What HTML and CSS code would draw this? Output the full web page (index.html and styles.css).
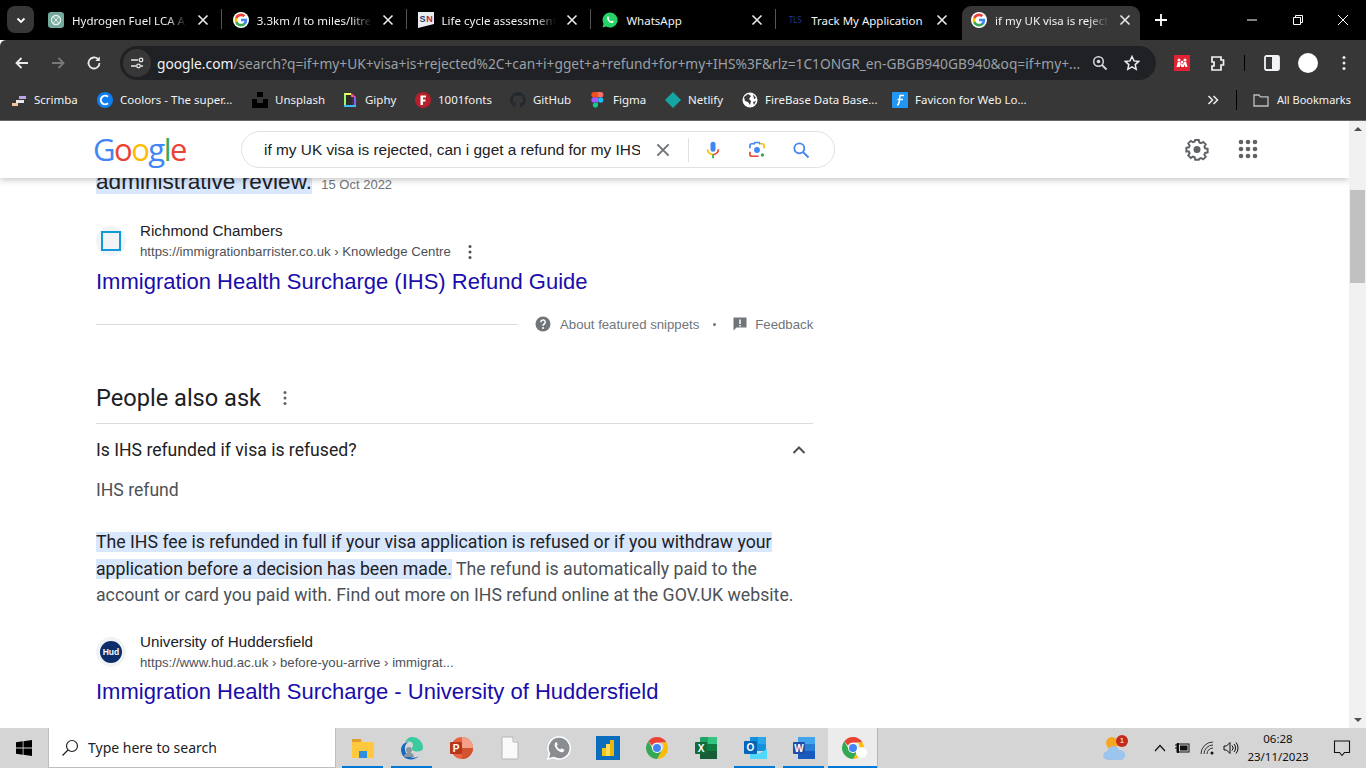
FILE: index.html
```html
<!DOCTYPE html>
<html lang="en">
<head>
    <meta charset="UTF-8">
    <meta name="viewport" content="width=device-width, initial-scale=1.0">
    <title>if my UK visa is rejected - Google Search</title>
    <link rel="stylesheet" href="styles.css">
</head>
<body>

    <svg class="sprite" width="0" height="0">
        <symbol id="g-logo" viewBox="0 0 24 24">
            <path fill="#4285F4" d="M22.56 12.25c0-.78-.07-1.53-.2-2.25H12v4.26h5.92c-.26 1.37-1.04 2.53-2.21 3.31v2.77h3.57c2.08-1.92 3.28-4.74 3.28-8.09z"/>
            <path fill="#34A853" d="M12 23c2.97 0 5.46-.98 7.28-2.66l-3.57-2.77c-.98.66-2.23 1.06-3.71 1.06-2.86 0-5.29-1.93-6.16-4.53H2.18v2.84C3.99 20.53 7.7 23 12 23z"/>
            <path fill="#FBBC05" d="M5.84 14.09c-.22-.66-.35-1.36-.35-2.09s.13-1.43.35-2.09V7.07H2.18C1.43 8.55 1 10.22 1 12s.43 3.45 1.18 4.93l3.66-2.84z"/>
            <path fill="#EA4335" d="M12 5.38c1.62 0 3.06.56 4.21 1.64l3.15-3.15C17.45 2.09 14.97 1 12 1 7.7 1 3.99 3.47 2.18 7.07l3.66 2.84c.87-2.6 3.3-4.53 6.16-4.53z"/>
        </symbol>
        <symbol id="x-icon" viewBox="0 0 16 16">
            <path d="M3.5 3.5l9 9M12.5 3.5l-9 9" fill="none" stroke="currentColor" stroke-width="1.6"/>
        </symbol>
        <symbol id="dots-icon" viewBox="0 0 4 16">
            <circle cx="2" cy="2.5" r="1.5" fill="currentColor"/>
            <circle cx="2" cy="8" r="1.5" fill="currentColor"/>
            <circle cx="2" cy="13.5" r="1.5" fill="currentColor"/>
        </symbol>
        <symbol id="chrome-icon" viewBox="0 0 24 24">
            <path fill="#EA4335" d="M12 1a11 11 0 0 1 9.5 5.5H12a5.5 5.5 0 0 0-5 3.2L3.300 5.300A11 11 0 0 1 12 1z"/>
            <path fill="#FBBC05" d="M21.500 6.500A11 11 0 0 1 12 23l4.700-8.200a5.500 5.500 0 0 0 0-8.300z"/>
            <path fill="#34A853" d="M3.300 5.300L7.900 13.500a5.500 5.500 0 0 0 8.800 1.300L12 23A11 11 0 0 1 3.300 5.300z"/>
            <circle cx="12" cy="12" r="5" fill="#fff"/>
            <circle cx="12" cy="12" r="4" fill="#4285F4"/>
        </symbol>
    </svg>

    <!-- tabs -->
    <div class="tabstrip">
        <div class="tab-search">
            <svg width="12" height="12" viewBox="0 0 12 12"><path d="M2.500 4.500L6 8l3.500-3.500" fill="none" stroke="#fff" stroke-width="1.800"/></svg>
        </div>
        <div class="tab">
            <svg class="favicon" viewBox="0 0 16 16"><rect width="16" height="16" rx="3" fill="#74aa9c"/><circle cx="8" cy="8" r="4.500" fill="none" stroke="#e8f2ef" stroke-width="1.300"/><path d="M5 4.500l6 7M11 4.500l-6 7" stroke="#e8f2ef" stroke-width="1"/></svg>
            <span class="tab-title">Hydrogen Fuel LCA A</span>
            <svg class="tab-close"><use href="#x-icon"/></svg>
        </div>
        <div class="tab">
            <svg class="favicon favicon-round"><use href="#g-logo"/></svg>
            <span class="tab-title">3.3km /l to miles/litre</span>
            <svg class="tab-close"><use href="#x-icon"/></svg>
        </div>
        <div class="tab">
            <svg class="favicon" viewBox="0 0 16 16"><path d="M0 0h16v12L0 16z" fill="#e9edf2"/><text x="4.500" y="9.500" class="sn-s">S</text><text x="11.500" y="9.500" class="sn-n">N</text></svg>
            <span class="tab-title">Life cycle assessment</span>
            <svg class="tab-close"><use href="#x-icon"/></svg>
        </div>
        <div class="tab">
            <svg class="favicon" viewBox="0 0 16 16"><path d="M8 .500a7.500 7.500 0 0 0-6.400 11.300L.500 15.500l3.800-1A7.500 7.500 0 1 0 8 .500z" fill="#25d366"/><path d="M5.500 4.500c-1 1-.8 2.600.7 4.400 1.500 1.700 3.200 2.600 4.500 2 .7-.3 1-1 .9-1.500L10 8.500l-.8.900c-1-.4-2-1.400-2.500-2.500l.7-.8-.8-1.700z" fill="#fff"/></svg>
            <span class="tab-title tab-title-full">WhatsApp</span>
            <svg class="tab-close"><use href="#x-icon"/></svg>
        </div>
        <div class="tab">
            <span class="favicon tls">TLS</span>
            <span class="tab-title tab-title-full">Track My Application</span>
            <svg class="tab-close"><use href="#x-icon"/></svg>
        </div>
        <div class="tab tab-active">
            <svg class="favicon favicon-round"><use href="#g-logo"/></svg>
            <span class="tab-title">if my UK visa is reject</span>
            <svg class="tab-close"><use href="#x-icon"/></svg>
        </div>
        <svg class="new-tab" width="14" height="14" viewBox="0 0 14 14"><path d="M7 1v12M1 7h12" stroke="#fff" stroke-width="1.800"/></svg>
        <div class="window-buttons">
            <svg width="12" height="12" viewBox="0 0 12 12"><path d="M1 6h10" stroke="#fff"/></svg>
            <svg width="12" height="12" viewBox="0 0 12 12"><path d="M1.500 3.500h7v7h-7zM3.500 3.500v-2h7v7h-2" fill="none" stroke="#fff"/></svg>
            <svg width="12" height="12" viewBox="0 0 12 12"><path d="M1 1l10 10M11 1L1 11" stroke="#fff"/></svg>
        </div>
    </div>

    <!-- address bar -->
    <div class="toolbar">
        <svg class="nav-icon" viewBox="0 0 16 16"><path d="M14 8H2.500M7.500 3L2.500 8l5 5" fill="none" stroke="#e8eaed" stroke-width="1.800"/></svg>
        <svg class="nav-icon" viewBox="0 0 16 16"><path d="M2 8h11.500M8.500 3l5 5-5 5" fill="none" stroke="#77797c" stroke-width="1.800"/></svg>
        <svg class="nav-icon" viewBox="0 0 16 16"><path d="M13.500 8A5.500 5.500 0 1 1 12 4.200" fill="none" stroke="#e8eaed" stroke-width="1.800"/><path d="M13.800 1.500v4.500H9.300z" fill="#e8eaed"/></svg>
        <div class="omnibox">
            <div class="site-info">
                <svg width="14" height="14" viewBox="0 0 14 14"><path d="M1 4h7M11 10h2M1 10h5" stroke="#e8eaed" stroke-width="1.400"/><circle cx="11" cy="4" r="1.800" fill="none" stroke="#e8eaed" stroke-width="1.300"/><circle cx="8.500" cy="10" r="1.800" fill="none" stroke="#e8eaed" stroke-width="1.300"/></svg>
            </div>
            <div class="url"><span class="url-host">google.com</span>/search?q=if+my+UK+visa+is+rejected%2C+can+i+gget+a+refund+for+my+IHS%3F&amp;rlz=1C1ONGR_en-GBGB940GB940&amp;oq=if+my+...</div>
            <svg class="omni-icon" viewBox="0 0 16 16"><circle cx="6.500" cy="6.500" r="4.800" fill="none" stroke="#d5d7da" stroke-width="1.500"/><circle cx="6.500" cy="6.500" r="1.800" fill="#d5d7da"/><path d="M10 10l4.500 4.500" stroke="#d5d7da" stroke-width="1.800"/></svg>
            <svg class="omni-icon" viewBox="0 0 16 16"><path d="M8 1.500l2 4.400 4.700.5-3.500 3.200 1 4.700L8 11.900l-4.200 2.400 1-4.700L1.300 6.400 6 5.900z" fill="none" stroke="#e8eaed" stroke-width="1.500"/></svg>
        </div>
        <div class="toolbar-actions">
            <svg width="16" height="16" viewBox="0 0 16 16"><rect width="16" height="16" fill="#e02232"/><g fill="#fff"><circle cx="5" cy="5" r="1.500"/><circle cx="11" cy="5" r="1.500"/><circle cx="8" cy="7" r="1.300"/><path d="M2.500 12l1.300-5h2.400l.8 3 .8-2h.4l.8 2 .8-3h2.400l1.300 5h-2.200l-.7-2.500-.9 2.500H7.300l-.9-2.500-.7 2.500z"/></g></svg>
            <svg class="puzzle" width="18" height="18" viewBox="0 0 18 18"><path d="M3 3h9v3h2.500v5H12v5H3v-4h2V8H3z" fill="none" stroke="#f1f3f4" stroke-width="1.700"/></svg>
            <span class="toolbar-sep"></span>
            <svg class="panel" width="16" height="16" viewBox="0 0 16 16"><rect x="1" y="1" width="14" height="14" rx="1.500" fill="none" stroke="#f1f3f4" stroke-width="1.800"/><rect x="8" y="1" width="7" height="14" fill="#f1f3f4"/></svg>
            <span class="avatar"></span>
            <svg class="menu-dots" width="4" height="16" color="#e8eaed"><use href="#dots-icon"/></svg>
        </div>
    </div>

    <!-- bookmarks -->
    <div class="bookmarks">
        <div class="bookmark bm-scrimba">
            <svg viewBox="0 0 16 16"><rect x="8" y="4" width="7" height="3" fill="#b9a7e8"/><rect x="5" y="8" width="8" height="3" fill="#e8e8e8"/><rect x="1" y="11" width="6" height="3" fill="#f0c59b"/></svg>
            <span>Scrimba</span>
        </div>
        <div class="bookmark bm-coolors">
            <svg viewBox="0 0 16 16"><circle cx="8" cy="8" r="8" fill="#0f7ff0"/><path d="M11 4.800a4.300 4.300 0 1 0 0 6.400" fill="none" stroke="#fff" stroke-width="2"/></svg>
            <span>Coolors - The super...</span>
        </div>
        <div class="bookmark bm-unsplash">
            <svg viewBox="0 0 16 16"><path d="M5 0h6v5H5zM0 7h5v4h6V7h5v9H0z" fill="#000"/></svg>
            <span>Unsplash</span>
        </div>
        <div class="bookmark bm-giphy">
            <svg viewBox="0 0 16 16"><path d="M2 1h8v14H2z" fill="#2b2b2b"/><path d="M2 1h2v14H2z" fill="#a5f56c"/><path d="M2 13h12v2H2z" fill="#38bdf8"/><path d="M12 5h2v8h-2z" fill="#8b5cf6"/><path d="M3 1h6v2H3z" fill="#fff45c"/><path d="M9 1l5 4h-5z" fill="#f9588f"/></svg>
            <span>Giphy</span>
        </div>
        <div class="bookmark bm-fonts">
            <svg viewBox="0 0 16 16"><circle cx="8" cy="8" r="8" fill="#b5202b"/><path d="M5.500 3.500h5.500v2H8v2h2.500v2H8v3.500H5.500z" fill="#fff"/></svg>
            <span>1001fonts</span>
        </div>
        <div class="bookmark bm-github">
            <svg viewBox="0 0 16 16"><path d="M8 0a8 8 0 0 0-2.500 15.600c.4 0 .5-.2.500-.4v-1.400c-2.200.5-2.700-1-2.700-1-.4-.9-.9-1.200-.9-1.200-.7-.5.100-.5.100-.5.800.1 1.200.8 1.200.8.700 1.200 1.900.9 2.300.7 0-.5.300-.9.500-1.100-1.800-.2-3.600-.9-3.600-4 0-.9.300-1.600.8-2.100 0-.2-.4-1 .1-2.100 0 0 .7-.2 2.200.8a7.700 7.700 0 0 1 4 0c1.500-1 2.200-.8 2.200-.8.400 1.100.2 1.900.1 2.100.5.600.8 1.300.8 2.100 0 3.100-1.900 3.700-3.700 3.900.3.300.6.800.6 1.500v2.200c0 .2.100.5.600.4A8 8 0 0 0 8 0z" fill="#24292f"/></svg>
            <span>GitHub</span>
        </div>
        <div class="bookmark bm-figma">
            <svg viewBox="0 0 16 16"><path d="M4 0h4v5.300H4a2.650 2.650 0 0 1 0-5.300z" fill="#f24e1e"/><path d="M8 0h2.700a2.650 2.650 0 0 1 0 5.300H8z" fill="#ff7262"/><path d="M4 5.300h4v5.300H4a2.650 2.650 0 0 1 0-5.300z" fill="#a259ff"/><circle cx="10.700" cy="8" r="2.650" fill="#1abcfe"/><path d="M4 10.700h4v2.700A2.650 2.650 0 1 1 4 10.700z" fill="#0acf83"/></svg>
            <span>Figma</span>
        </div>
        <div class="bookmark bm-netlify">
            <svg viewBox="0 0 16 16"><path d="M8 0l8 8-8 8-8-8z" fill="#15a6a3"/></svg>
            <span>Netlify</span>
        </div>
        <div class="bookmark bm-firebase">
            <svg viewBox="0 0 16 16"><circle cx="8" cy="8" r="7.500" fill="#fff"/><path d="M2 5l4-3 3 2-2 3 2 2-1 4-2-3-3-1zM11 2l3 4-2 1zM11 10l3-1-2 4z" fill="#3a3a3a"/></svg>
            <span>FireBase Data Base...</span>
        </div>
        <div class="bookmark bm-favicon">
            <svg viewBox="0 0 16 16"><rect width="16" height="16" rx="1" fill="#2196f3"/><path d="M5 13c2 0 2-2 2.300-4L8 3.500h4M5.500 7.500H11" fill="none" stroke="#fff" stroke-width="1.500"/></svg>
            <span>Favicon for Web Lo...</span>
        </div>
        <div class="bookmarks-end">
            <svg width="12" height="12" viewBox="0 0 12 12"><path d="M1.500 2l4 4-4 4M6.500 2l4 4-4 4" fill="none" stroke="#e8eaed" stroke-width="1.600"/></svg>
            <span class="toolbar-sep"></span>
            <div class="bookmark all-bookmarks">
                <svg viewBox="0 0 16 16"><path d="M1 3h5l1.500 1.800H15V14H1z" fill="none" stroke="#bdbfc2" stroke-width="1.300"/></svg>
                <span>All Bookmarks</span>
            </div>
        </div>
    </div>

    <!-- page -->
    <div class="viewport">
        <div class="page">
            <header class="search-header">
                <div class="google-logo"><span class="c-blue">G</span><span class="c-red">o</span><span class="c-yellow">o</span><span class="c-blue">g</span><span class="c-green">l</span><span class="c-red">e</span></div>
                <div class="search-box">
                    <span class="search-text">if my UK visa is rejected, can i gget a refund for my IHS</span>
                    <svg class="search-clear" width="20" height="20" color="#70757a"><use href="#x-icon"/></svg>
                    <span class="search-sep"></span>
                    <svg class="search-btn" viewBox="0 0 24 24"><rect x="9" y="2" width="6" height="12" rx="3" fill="#4285f4"/><path d="M5.500 11a6.500 6.500 0 0 0 6.500 6.500" fill="none" stroke="#fbbc05" stroke-width="2"/><path d="M12 17.500A6.500 6.500 0 0 0 18.500 11" fill="none" stroke="#ea4335" stroke-width="2"/><path d="M12 17.500V22" stroke="#34a853" stroke-width="2"/></svg>
                    <svg class="search-btn" viewBox="0 0 24 24"><path d="M8 5l1.500-2h5L16 5" fill="none" stroke="#4285f4" stroke-width="2"/><path d="M16 4.500h2a2.500 2.500 0 0 1 2.500 2.500v3" fill="none" stroke="#fbbc05" stroke-width="2"/><path d="M3.500 10V7A2.500 2.500 0 0 1 6 4.500h3" fill="none" stroke="#4285f4" stroke-width="2"/><path d="M3.500 14v3A2.500 2.500 0 0 0 6 19.500h8" fill="none" stroke="#ea4335" stroke-width="2"/><circle cx="12" cy="12" r="3.500" fill="#4285f4"/><circle cx="18.500" cy="18" r="2" fill="#34a853"/></svg>
                    <svg class="search-btn" viewBox="0 0 24 24"><circle cx="10" cy="10" r="6" fill="none" stroke="#4285f4" stroke-width="2.200"/><path d="M14.500 14.500L21 21" stroke="#4285f4" stroke-width="2.400"/></svg>
                </div>
                <div class="header-right">
                    <svg width="24" height="24" viewBox="0 0 24 24"><path d="M10 2h4l.6 2.800 1.900.8 2.400-1.500 2.800 2.800-1.500 2.400.8 1.900 2.800.6v4l-2.800.6-.8 1.900 1.500 2.400-2.800 2.800-2.400-1.500-1.900.8L14 24h-4l-.6-2.800-1.900-.8-2.400 1.500-2.800-2.800 1.500-2.400-.8-1.900L.2 14.700v-4l2.800-.6.800-1.900-1.500-2.400 2.800-2.800 2.400 1.500 1.900-.8z" transform="translate(1.200 1.200) scale(.9)" fill="none" stroke="#5f6368" stroke-width="2.200"/><circle cx="12" cy="12.500" r="3.500" fill="#5f6368"/></svg>
                    <svg width="20" height="20" viewBox="0 0 20 20" fill="#5f6368"><circle cx="3" cy="3" r="2.300"/><circle cx="10" cy="3" r="2.300"/><circle cx="17" cy="3" r="2.300"/><circle cx="3" cy="10" r="2.300"/><circle cx="10" cy="10" r="2.300"/><circle cx="17" cy="10" r="2.300"/><circle cx="3" cy="17" r="2.300"/><circle cx="10" cy="17" r="2.300"/><circle cx="17" cy="17" r="2.300"/></svg>
                </div>
            </header>

            <main class="results">
                <div class="snippet-end"><span class="hl">administrative review.</span> <span class="snippet-date">15 Oct 2022</span></div>

                <div class="source">
                    <div class="source-icon"><span class="rc-square"></span></div>
                    <div class="source-text">
                        <div class="source-name">Richmond Chambers</div>
                        <div class="source-url">https://immigrationbarrister.co.uk › Knowledge Centre <svg class="url-dots" width="4" height="16" color="#4d5156"><use href="#dots-icon"/></svg></div>
                    </div>
                </div>
                <a class="result-title" href="#">Immigration Health Surcharge (IHS) Refund Guide</a>

                <div class="snippet-foot">
                    <span class="foot-line"></span>
                    <svg width="16" height="16" viewBox="0 0 16 16"><circle cx="8" cy="8" r="7.500" fill="#70757a"/><path d="M5.800 6.200a2.200 2.200 0 1 1 3.400 1.800c-.8.500-1.200.9-1.200 1.800" fill="none" stroke="#fff" stroke-width="1.500"/><circle cx="8" cy="12" r="1" fill="#fff"/></svg>
                    <span class="foot-text">About featured snippets</span>
                    <span class="foot-dot"></span>
                    <svg width="16" height="16" viewBox="0 0 16 16"><path d="M1.500 1.500h13v10H4.500l-3 3z" fill="#70757a"/><path d="M8 3.500v4.500M8 9v1.500" stroke="#fff" stroke-width="1.500"/></svg>
                    <span class="foot-text">Feedback</span>
                </div>

                <div class="paa-head">
                    <h2 class="paa-title">People also ask</h2>
                    <svg width="4" height="16" color="#5f6368"><use href="#dots-icon"/></svg>
                </div>

                <div class="paa-question">
                    <span>Is IHS refunded if visa is refused?</span>
                    <svg width="16" height="16" viewBox="0 0 16 16"><path d="M2.500 11L8 5.500l5.500 5.500" fill="none" stroke="#4d5156" stroke-width="2"/></svg>
                </div>
                <div class="paa-sub">IHS refund</div>
                <p class="paa-answer"><span class="hl hl-dark">The IHS fee is refunded in full if your visa application is refused or if you withdraw your application before a decision has been made.</span> The refund is automatically paid to the account or card you paid with. Find out more on IHS refund online at the GOV.UK website.</p>

                <div class="source source-hud">
                    <div class="source-icon"><span class="hud-badge">Hud</span></div>
                    <div class="source-text">
                        <div class="source-name">University of Huddersfield</div>
                        <div class="source-url">https://www.hud.ac.uk › before-you-arrive › immigrat...</div>
                    </div>
                </div>
                <a class="result-title" href="#">Immigration Health Surcharge - University of Huddersfield</a>
            </main>
        </div>
        <div class="scrollbar">
            <span class="arrow-up"></span>
            <div class="scroll-track"><div class="scroll-thumb"></div></div>
            <span class="arrow-down"></span>
        </div>
    </div>

    <!-- windows taskbar -->
    <div class="taskbar">
        <div class="start">
            <svg width="16" height="16" viewBox="0 0 16 16" fill="#000"><path d="M0 2.300L6.700 1.300V7.600H0zM7.500 1.200L16 0v7.600H7.500zM0 8.400h6.700v6.300L0 13.700zM7.500 8.400H16V16L7.500 14.800z"/></svg>
        </div>
        <div class="task-search">
            <svg width="18" height="18" viewBox="0 0 18 18"><circle cx="11" cy="7" r="5.500" fill="none" stroke="#222" stroke-width="1.200"/><path d="M7 11l-5.500 5.500" stroke="#222" stroke-width="1.300"/></svg>
            <span>Type here to search</span>
        </div>
        <div class="task-icons">
            <div class="task-app running">
                <svg viewBox="0 0 24 24"><path d="M1 3h9l2 3h11v16H1z" fill="#ffc83d"/><path d="M1 3h9v3H1z" fill="#e0a030"/><path d="M8 15h8v7H8z" fill="#2d8fe0"/></svg>
            </div>
            <div class="task-app running">
                <svg viewBox="0 0 24 24"><path d="M12 1a11 11 0 0 1 11 11c0 2.500-3 3.500-6 3.500-3 0-5-1-5-3 0-1.500 1-2 1-3.500C13 6 9 4 5 7 6 3.500 8.500 1 12 1z" fill="#3bc9a0"/><path d="M1 13c1-5 4-7 7-6.500-4 2-4 8-1 12 2.500 3 8 4.500 12 1.500-2 2-5 3.500-8 3.500-6 0-10-4-10-10.500z" fill="#1468c4"/><circle cx="9" cy="14" r="3" fill="#8b979f"/><path d="M4 21c0-3 2-4.500 5-4.500s5 1.500 5 4.500z" fill="#8b979f"/></svg>
            </div>
            <div class="task-app">
                <svg viewBox="0 0 24 24"><circle cx="13" cy="12" r="11" fill="#e8633e"/><path d="M13 1a11 11 0 0 1 11 11H13z" fill="#f2a08a"/><path d="M13 12h11a11 11 0 0 1-11 11z" fill="#d35230"/><rect x="1" y="6" width="12" height="12" rx="1" fill="#b7361a"/><text x="7" y="15.500" class="ppt-letter">P</text></svg>
            </div>
            <div class="task-app">
                <svg viewBox="0 0 24 24"><path d="M4 1h11l5 5v17H4z" fill="#f9f9f9" stroke="#b5b5b5"/><path d="M15 1v5h5" fill="#e5e5e5" stroke="#b5b5b5"/></svg>
            </div>
            <div class="task-app">
                <svg viewBox="0 0 24 24"><path d="M12 1a11 11 0 0 0-9.500 16.500L1 23l5.700-1.500A11 11 0 1 0 12 1z" fill="#8a8d90" stroke="#fff" stroke-width="1.500"/><path d="M8.500 6.500c-1.500 1.500-1 4 1 6.500s4.500 3.800 6.500 3c1-.5 1.400-1.500 1.200-2.200l-2.700-1.500-1.100 1.300c-1.500-.6-2.900-2-3.700-3.700l1.100-1.200-1.200-2.600z" fill="#fff"/></svg>
            </div>
            <div class="task-app">
                <svg viewBox="0 0 24 24"><rect width="24" height="24" fill="#0a6ebd"/><rect x="6" y="12" width="4" height="8" fill="#f2c811"/><rect x="10" y="8" width="4" height="12" fill="#f9dc5c"/><rect x="14" y="4" width="4" height="16" fill="#e8b70a"/></svg>
            </div>
            <div class="task-app">
                <svg><use href="#chrome-icon"/></svg>
            </div>
            <div class="task-app">
                <svg viewBox="0 0 24 24"><rect x="6" y="1" width="17" height="22" rx="1" fill="#21a366"/><rect x="14" y="1" width="9" height="7" fill="#33c481"/><rect x="6" y="8" width="17" height="7" fill="#107c41"/><rect x="6" y="15" width="17" height="8" fill="#185c37"/><rect x="1" y="6" width="12" height="12" rx="1" fill="#0f6b3a"/><text x="7" y="15.500" class="ppt-letter">X</text></svg>
            </div>
            <div class="task-app running">
                <svg viewBox="0 0 24 24"><rect x="7" y="1" width="16" height="14" fill="#1490df"/><rect x="15" y="1" width="8" height="7" fill="#28a8ea"/><path d="M7 13l8 5 9-5v10H7z" fill="#50d9ff"/><rect x="1" y="5" width="13" height="13" rx="1" fill="#0364b8"/><text x="7.500" y="15" class="ppt-letter">O</text></svg>
            </div>
            <div class="task-app running">
                <svg viewBox="0 0 24 24"><rect x="6" y="1" width="17" height="22" rx="1" fill="#2b7cd3"/><rect x="6" y="1" width="17" height="7" fill="#41a5ee"/><rect x="6" y="15" width="17" height="8" fill="#185abd"/><rect x="1" y="6" width="12" height="12" rx="1" fill="#1e4ea8"/><text x="7" y="15.500" class="ppt-letter">W</text></svg>
            </div>
            <div class="task-app running task-active">
                <svg><use href="#chrome-icon"/></svg>
                <span class="chrome-dot"></span>
            </div>
        </div>
        <span class="task-divider"></span>
        <div class="tray">
            <div class="weather">
                <svg width="26" height="26" viewBox="0 0 26 26"><circle cx="10" cy="8" r="6" fill="#f5a623"/><path d="M6 25a4.500 4.500 0 0 1-.5-9 6 6 0 0 1 11.500-1 5 5 0 0 1 2 10z" fill="#9cc4ec"/></svg>
                <span class="weather-badge">1</span>
            </div>
            <svg class="tray-caret" width="12" height="8" viewBox="0 0 12 8"><path d="M1 7l5-5.500L11 7" fill="none" stroke="#111" stroke-width="1.200"/></svg>
            <svg class="tray-icon" width="16" height="12" viewBox="0 0 16 12"><path d="M1 3h2M1 6h2M3 1.500h1.500v9H3z" stroke="#111"/><rect x="4.500" y="2" width="10.500" height="8" fill="none" stroke="#111"/><rect x="6" y="3.500" width="7.500" height="5" fill="#111"/></svg>
            <svg class="tray-icon tray-wifi" width="16" height="14" viewBox="0 0 16 14"><path d="M1 13A12 12 0 0 1 13 1M4 13a9 9 0 0 1 9-9M7 13a6 6 0 0 1 6-6" fill="none" stroke="#333"/><circle cx="12" cy="12" r="1.500" fill="#111"/></svg>
            <svg class="tray-icon" width="16" height="14" viewBox="0 0 16 14"><path d="M1 5h2.500L7 1.500v11L3.500 9H1z" fill="none" stroke="#111"/><path d="M9 4.500a3.500 3.500 0 0 1 0 5M11 3a6 6 0 0 1 0 8M13 1.500a8.500 8.500 0 0 1 0 11" fill="none" stroke="#111"/></svg>
            <div class="clock">
                <div>06:28</div>
                <div>23/11/2023</div>
            </div>
            <svg class="notify" width="18" height="18" viewBox="0 0 18 18"><path d="M1.500 2h15v11.500h-5L9 16.500l-2.500-3h-5z" fill="none" stroke="#111" stroke-width="1.100"/></svg>
        </div>
    </div>

</body>
</html>
```

FILE: styles.css
```css
* {
    box-sizing: border-box;
}
html, body {
    margin: 0;
    height: 768px;
    overflow: hidden;
}
body {
    font-family: 'Liberation Sans', Arial, sans-serif;
    background-color: #fff;
    display: flex;
    flex-direction: column;
}
.sprite {
    position: absolute;
}

/* tabs */
.tabstrip {
    height: 40px;
    background-color: #000;
    display: flex;
    align-items: flex-end;
    padding-left: 7px;
    position: relative;
    flex-shrink: 0;
}
.tab-search {
    width: 27px;
    height: 27px;
    margin-bottom: 7px;
    margin-right: 3px;
    background-color: #373737;
    border-radius: 8px;
    display: flex;
    align-items: center;
    justify-content: center;
}
.tab {
    width: 184.8px;
    height: 34px;
    padding: 0 11px 6px 11px;
    display: flex;
    align-items: center;
    gap: 8px;
    color: #f1f3f4;
    font-family: 'Noto Sans', sans-serif;
    font-size: 11.500px;
    position: relative;
}
.tab::after {
    content: "";
    position: absolute;
    right: 0;
    top: 3px;
    height: 20px;
    border-right: 1px solid #555;
}
.tab:nth-child(6)::after,
.tab:nth-child(7)::after,
.tab-active::after {
    display: none;
}
.tab-active {
    width: 178px;
    margin-left: 1px;
    padding-right: 7px;
    padding-left: 9px;
    background-color: #373737;
    border-radius: 9px 9px 0 0;
}
.favicon {
    width: 16px;
    height: 16px;
    flex-shrink: 0;
}
.favicon-round {
    background-color: #fff;
    border-radius: 50%;
    padding: 1px;
}
.sn-s, .sn-n {
    font-family: 'Liberation Sans', sans-serif;
    font-size: 9px;
    font-weight: bold;
    text-anchor: middle;
}
.sn-s { fill: #1f3f77; }
.sn-n { fill: #d3222a; }
.tls {
    color: #1c3a8a;
    font-size: 8px;
    line-height: 16px;
    text-align: center;
}
.tab-title {
    flex: 1;
    min-width: 0;
    white-space: nowrap;
    overflow: hidden;
    -webkit-mask-image: linear-gradient(to right, #000 82%, transparent 100%);
    mask-image: linear-gradient(to right, #000 82%, transparent 100%);
}
.tab-title-full {
    -webkit-mask-image: none;
    mask-image: none;
}
.tab-close {
    width: 16px;
    height: 16px;
    flex-shrink: 0;
    color: #e8eaed;
}
.new-tab {
    margin-left: 14px;
    margin-bottom: 13px;
}
.window-buttons {
    margin-left: auto;
    width: 138px;
    padding: 0 17px 0 18px;
    height: 40px;
    display: flex;
    align-items: center;
    justify-content: space-between;
}

/* toolbar */
.toolbar {
    height: 44px;
    padding-top: 2px;
    background-color: #373737;
    display: flex;
    align-items: center;
    padding-left: 14px;
    flex-shrink: 0;
    border-radius: 6px 0 0 0;
}
.nav-icon {
    width: 16px;
    height: 16px;
    margin-right: 20px;
    flex-shrink: 0;
}
.omnibox {
    width: 1036px;
    height: 34px;
    margin-left: -2px;
    background-color: #202124;
    border-radius: 17px;
    display: flex;
    align-items: center;
    padding: 0 16px 0 3px;
    flex-shrink: 0;
}
.site-info {
    width: 28px;
    height: 28px;
    border-radius: 50%;
    background-color: #373737;
    display: flex;
    align-items: center;
    justify-content: center;
    flex-shrink: 0;
}
.url {
    margin-left: 6px;
    flex: 1;
    white-space: nowrap;
    overflow: hidden;
    font-family: 'Noto Sans', sans-serif;
    font-size: 13.750px;
    color: #9aa0a6;
}
.url-host {
    color: #f1f3f4;
}
.omni-icon {
    width: 16px;
    height: 16px;
    margin-left: 16px;
    flex-shrink: 0;
}
.url + .omni-icon {
    margin-left: 8px;
}
.toolbar-actions {
    display: flex;
    align-items: center;
    margin-left: 18px;
}
.toolbar-sep {
    display: block;
    height: 16px;
    border-right: 1px solid #000;
}
.puzzle {
    margin-left: 19px;
}
.toolbar-actions .toolbar-sep {
    margin-left: 17px;
}
.panel {
    margin-left: 19px;
}
.avatar {
    width: 20px;
    height: 20px;
    margin-left: 18px;
    background-color: #fff;
    border-radius: 50%;
}
.menu-dots {
    margin-left: 24px;
}

/* bookmarks */
.bookmarks {
    height: 36px;
    background-color: #373737;
    display: flex;
    align-items: center;
    padding-left: 11px;
    padding-bottom: 5px;
    flex-shrink: 0;
}
.bookmark {
    display: flex;
    align-items: center;
    gap: 7px;
    color: #f1f3f4;
    font-family: 'Noto Sans', sans-serif;
    font-size: 11.500px;
    white-space: nowrap;
    flex-shrink: 0;
}
.bookmark svg {
    width: 16px;
    height: 16px;
    flex-shrink: 0;
}
.bm-scrimba { width: 86px; }
.bm-coolors { width: 155px; }
.bm-unsplash { width: 90px; }
.bm-giphy { width: 73px; }
.bm-fonts { width: 95px; }
.bm-github { width: 80px; }
.bm-figma { width: 75px; }
.bm-netlify { width: 77px; }
.bm-firebase { width: 150px; }
.bookmarks-end {
    margin-left: auto;
    display: flex;
    align-items: center;
}
.bookmarks-end .toolbar-sep {
    margin: 0 16px 0 17px;
    height: 20px;
}
.all-bookmarks {
    padding-right: 15px;
    gap: 8px;
    font-size: 11px;
}

/* page */
.viewport {
    flex: 1;
    min-height: 0;
    display: flex;
    border-top: 1px solid #666;
}
.page {
    flex: 1;
    min-width: 0;
    position: relative;
    overflow: hidden;
}
.search-header {
    position: absolute;
    top: 0;
    left: 0;
    right: 0;
    height: 57px;
    background-color: #fff;
    box-shadow: 0 2px 6px rgba(32, 33, 36, 0.25);
    display: flex;
    align-items: center;
    padding-left: 93px;
    z-index: 2;
}
.google-logo {
    width: 148px;
    font-family: 'Open Sans', sans-serif;
    font-size: 31px;
    font-weight: 500;
    letter-spacing: -1.5px;
    line-height: 40px;
    margin-top: -1px;
}
.c-blue { color: #4285f4; }
.c-red { color: #ea4335; }
.c-yellow { color: #fbbc05; }
.c-green { color: #34a853; }
.search-box {
    width: 594px;
    height: 37px;
    border: 1px solid #dfe1e5;
    border-radius: 19px;
    display: flex;
    align-items: center;
    padding-left: 22px;
    padding-right: 21px;
}
.search-text {
    width: 376px;
    white-space: nowrap;
    overflow: hidden;
    font-size: 15.400px;
    color: #202124;
}
.search-clear {
    margin-left: 13px;
    flex-shrink: 0;
}
.search-sep {
    height: 24px;
    margin-left: 15px;
    border-right: 1px solid #dfe1e5;
}
.search-btn {
    width: 20px;
    height: 20px;
    margin-left: 24px;
    flex-shrink: 0;
}
.search-sep + .search-btn {
    margin-left: 14px;
}
.header-right {
    margin-left: auto;
    margin-right: 91px;
    margin-top: -2px;
    display: flex;
    align-items: center;
    gap: 29px;
}

/* results */
.results {
    width: 717px;
    margin-left: 96px;
    padding-top: 48px;
    color: #202124;
}
.snippet-end {
    font-size: 22.600px;
    line-height: 26px;
}
.hl {
    background-color: #d9e7fd;
}
.snippet-date {
    color: #70757a;
    font-size: 13px;
    margin-left: 3px;
}
.source {
    display: flex;
    align-items: center;
    gap: 14px;
    margin-top: 22px;
}
.source-icon {
    width: 30px;
    height: 30px;
    border-radius: 50%;
    background-color: #f1f3f4;
    display: flex;
    align-items: center;
    justify-content: center;
    flex-shrink: 0;
}
.rc-square {
    width: 20px;
    height: 20px;
    border: 2px solid #0f9ad8;
}
.hud-badge {
    width: 22px;
    height: 22px;
    border-radius: 50%;
    background-color: #0b2f6b;
    color: #fff;
    font-size: 8.500px;
    font-weight: bold;
    line-height: 22px;
    text-align: center;
}
.source-name {
    font-size: 15.200px;
    line-height: 21px;
    color: #202124;
}
.source-url {
    font-size: 13.200px;
    line-height: 21px;
    color: #4d5156;
    display: flex;
    align-items: center;
    gap: 5px;
    white-space: pre;
}
.url-dots {
    margin-left: 9px;
}
.result-title {
    display: block;
    margin-top: 6px;
    font-size: 22px;
    line-height: 28px;
    color: #1a0dab;
    text-decoration: none;
}
.source-hud + .result-title {
    margin-top: 5px;
}
.snippet-foot {
    display: flex;
    align-items: center;
    margin-top: 18px;
    height: 20px;
    font-size: 13.200px;
    color: #70757a;
    white-space: nowrap;
}
.foot-line {
    width: 422px;
    flex-shrink: 0;
    margin-right: 17px;
    border-top: 1px solid #dadce0;
}
.snippet-foot svg {
    flex-shrink: 0;
}
.foot-text {
    margin-left: 9px;
}
.foot-text:last-child {
    margin-left: 7px;
}
.foot-dot {
    width: 3px;
    height: 3px;
    flex-shrink: 0;
    margin: 0 16px 0 14px;
    background-color: #70757a;
    border-radius: 50%;
}
.paa-head {
    display: flex;
    align-items: center;
    gap: 22px;
    margin-top: 44px;
    height: 40px;
}
.paa-title {
    margin: 0;
    font-family: Roboto, sans-serif;
    font-size: 23.600px;
    font-weight: 400;
    color: #202124;
}
.paa-question {
    display: flex;
    align-items: center;
    justify-content: space-between;
    height: 52px;
    margin-top: 5px;
    padding-right: 6px;
    border-top: 1px solid #dadce0;
    font-family: Roboto, sans-serif;
    font-size: 17.600px;
    color: #202124;
}
.paa-sub {
    margin-top: 2px;
    height: 26px;
    line-height: 26px;
    font-family: Roboto, sans-serif;
    font-size: 17.600px;
    color: #4d5156;
}
.paa-answer {
    margin: 26px 0 0;
    font-family: Roboto, sans-serif;
    font-size: 17.700px;
    line-height: 26.500px;
    color: #4d5156;
}
.hl-dark {
    color: #202124;
}
.source-hud {
    margin-top: 22px;
}

/* scrollbar */
.scrollbar {
    width: 17px;
    flex-shrink: 0;
    background-color: #f1f1f1;
    display: flex;
    flex-direction: column;
    align-items: center;
}
.arrow-up, .arrow-down {
    width: 0;
    height: 0;
    margin: 6px 0;
    border-left: 4px solid transparent;
    border-right: 4px solid transparent;
}
.arrow-up {
    border-bottom: 4px solid #505050;
}
.arrow-down {
    border-top: 4px solid #505050;
}
.scroll-track {
    flex: 1;
    width: 100%;
    padding: 53px 1px 0;
}
.scroll-thumb {
    height: 93px;
    background-color: #c1c1c1;
}

/* taskbar */
.taskbar {
    height: 40px;
    background-color: #d5d5d5;
    display: flex;
    align-items: stretch;
    flex-shrink: 0;
}
.start {
    width: 48px;
    display: flex;
    align-items: center;
    justify-content: center;
}
.task-search {
    width: 288px;
    background-color: #fff;
    border: 1px solid #bdbdbd;
    border-top: none;
    display: flex;
    align-items: center;
    padding-left: 12px;
    gap: 9px;
    font-family: 'Noto Sans', sans-serif;
    font-size: 14px;
    color: #222;
}
.task-icons {
    display: flex;
    margin-left: 2px;
}
.task-app {
    width: 49px;
    display: flex;
    align-items: center;
    justify-content: center;
    position: relative;
}
.task-app svg {
    width: 24px;
    height: 24px;
}
.running::after {
    content: "";
    position: absolute;
    left: 4px;
    right: 4px;
    bottom: 0;
    height: 2px;
    background-color: #0078d4;
}
.task-active {
    background-color: #ececec;
}
.task-active::after {
    left: 0;
    right: 0;
}
.chrome-dot {
    position: absolute;
    left: 28px;
    top: 19px;
    width: 11px;
    height: 11px;
    background-color: #fff;
    border-radius: 50%;
}
.ppt-letter {
    fill: #fff;
    font-family: 'Liberation Sans', sans-serif;
    font-size: 10px;
    font-weight: bold;
    text-anchor: middle;
}
.task-divider {
    border-right: 1px solid #b8b8b8;
}
.tray {
    flex: 1;
    display: flex;
    align-items: center;
    color: #111;
}
.weather {
    margin-left: 224px;
    position: relative;
    height: 26px;
}
.weather-badge {
    position: absolute;
    top: 0;
    right: 0;
    width: 12px;
    height: 12px;
    border-radius: 50%;
    background-color: #c42b1c;
    color: #fff;
    font-size: 8px;
    line-height: 12px;
    text-align: center;
}
.tray-caret {
    margin-left: 26px;
}
.tray-icon {
    margin-left: 8px;
}
.tray-wifi {
    margin-left: 10px;
    margin-right: -1px;
}
.clock {
    width: 70px;
    margin-left: 4px;
    font-family: 'Noto Sans', sans-serif;
    font-size: 11.500px;
    line-height: 18px;
    text-align: center;
}
.notify {
    margin-left: 20px;
}
```
